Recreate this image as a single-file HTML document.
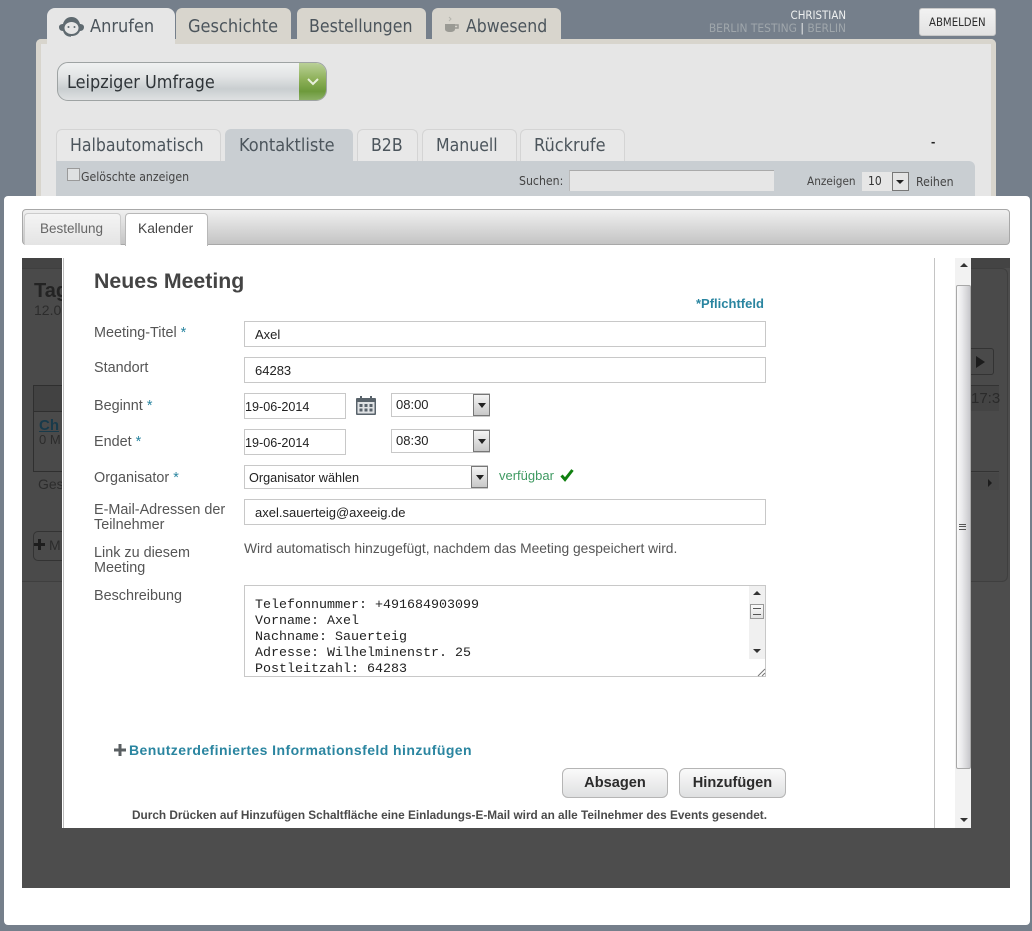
<!DOCTYPE html>
<html><head><meta charset="utf-8"><title>Neues Meeting</title>
<style>
html,body{margin:0;padding:0;width:1032px;height:931px;overflow:hidden;background:#757f8b;font-family:"Liberation Sans",sans-serif}
div,span,svg{position:absolute;box-sizing:border-box}
.t{white-space:nowrap;line-height:1}
.h{font-family:"DejaVu Sans Condensed","DejaVu Sans",sans-serif;font-stretch:condensed;color:#4c555c}
.tab{background:#d8d5cd;border-radius:6px 6px 0 0;top:8px;height:31px}
.st{background:#e8e8e8;border:1px solid #d4d4d4;border-bottom:0;border-radius:6px 6px 0 0;top:129px;height:32px}
.l{color:#555;font-size:14.400px;left:94px;line-height:15px;white-space:nowrap}
.l b{font-weight:normal;color:#2a85a0}
.i{background:#fff;border:1px solid #c8c8c8;font-size:13px;color:#222;line-height:24px;white-space:nowrap}
.ar{background:linear-gradient(#f4f4f4,#c8c8c8);border:1px solid #777;width:17px}
.ar:after{content:"";position:absolute;left:4px;top:8px;border:4px solid transparent;border-top:5px solid #222;border-bottom:0}
.btn{background:linear-gradient(#fafafa,#dfe0e1);border:1px solid #b5b5b5;border-radius:6px;font-weight:bold;font-size:14.600px;color:#2b2b2b;text-align:center;line-height:29px;top:768px;height:30px}
</style></head><body>

<!-- background app -->
<div style="left:36px;top:39px;width:960px;height:170px;background:#e6e6e6;border:5px solid #d8d5cd;border-bottom:0;border-radius:5px 5px 0 0"></div>
<div class="tab" style="left:47px;width:128px;background:#e6e6e6;height:38px;border-radius:8px 8px 0 0"></div>
<svg style="left:58px;top:16px" width="27" height="22" viewBox="0 0 27 22"><path d="M5 15C2 15 1 13 1 11S3 8 5 8C6 4 9 1 13.500 1S21 4 22 8C24 8 26 9 26 11S25 15 22 15C20 19 17 20 13.500 20S7 19 5 15Z" fill="#5f6a70"/><ellipse cx="13.500" cy="12" rx="7" ry="6" fill="#e6e6e6"/><circle cx="10.500" cy="11" r="1" fill="#5f6a70"/><circle cx="16.500" cy="11" r="1" fill="#5f6a70"/><path d="M6 15C7 19 10 20 13 20" fill="none" stroke="#5f6a70" stroke-width="1.500"/></svg>
<span class="t h" style="left:90px;top:18px;font-size:18px">Anrufen</span>
<div class="tab" style="left:176px;width:115px"></div>
<span class="t h" style="left:188px;top:18px;font-size:18px">Geschichte</span>
<div class="tab" style="left:297px;width:129px"></div>
<span class="t h" style="left:309px;top:19px;font-size:17.600px">Bestellungen</span>
<div class="tab" style="left:432px;width:129px"></div>
<svg style="left:444px;top:16px" width="16" height="18" viewBox="0 0 16 18"><path d="M1 8H11V13C11 15 9 16 6 16S1 15 1 13Z" fill="#9a9a94"/><path d="M11 9H14V12H11" fill="none" stroke="#9a9a94" stroke-width="1.500"/><path d="M5 1L7 3L5 5" fill="none" stroke="#b5b5ae"/></svg>
<span class="t h" style="left:466px;top:19px;font-size:17.500px">Abwesend</span>

<span class="t h" style="right:186px;top:10px;font-size:11.400px;color:#eef0f0">CHRISTIAN</span>
<span class="t h" style="right:186px;top:23px;font-size:11.900px;color:#9fa6ab">BERLIN TESTING <span style="position:static;color:#eee">|</span> BERLIN</span>
<div style="left:919px;top:8px;width:77px;height:28px;background:linear-gradient(#f2f2f2,#e2e2e2);border-radius:3px;border:1px solid #c8c8c8"></div>
<span class="t h" style="left:929px;top:17px;font-size:11.300px;color:#2c2c2c">ABMELDEN</span>

<div style="left:57px;top:62px;width:270px;height:39px;border:1px solid #9ea3a3;border-radius:11px;background:linear-gradient(#f0f1f1,#e3e5e6 35%,#c9ced0 70%,#dfe1e2);overflow:hidden">
<div style="left:241px;top:-1px;width:28px;height:39px;background:linear-gradient(#bcd29b,#8db058 45%,#6d9a3b 75%,#8fb36a)"></div></div>
<svg style="left:306px;top:77px" width="14" height="10" viewBox="0 0 14 10"><path d="M2 2L7 7L12 2" fill="none" stroke="#e8f0dc" stroke-width="2"/></svg>
<span class="t h" style="left:67px;top:74px;font-size:17.900px;color:#2f3438">Leipziger Umfrage</span>

<div class="st" style="left:56px;width:165px"></div><span class="t h" style="left:70px;top:138px;font-size:17.500px">Halbautomatisch</span>
<div class="st" style="left:225px;width:128px;background:#c9ced2;border-color:#c9ced2"></div><span class="t h" style="left:239px;top:137px;font-size:18px">Kontaktliste</span>
<div class="st" style="left:357px;width:61px"></div><span class="t h" style="left:371px;top:138px;font-size:17.500px">B2B</span>
<div class="st" style="left:422px;width:95px"></div><span class="t h" style="left:436px;top:138px;font-size:17.500px">Manuell</span>
<div class="st" style="left:520px;width:105px"></div><span class="t h" style="left:534px;top:137px;font-size:18px">Rückrufe</span>
<span class="t" style="left:931px;top:135px;font-size:13px;font-weight:bold;color:#222">-</span>

<div style="left:56px;top:161px;width:919px;height:40px;background:#c9ced2;border-radius:0 6px 0 0"></div>
<div style="left:67px;top:168px;width:13px;height:13px;background:#dfe1e2;border:1px solid #9a9a9a"></div>
<span class="t h" style="left:81px;top:171px;font-size:12.200px;color:#444">Gelöschte anzeigen</span>
<span class="t h" style="left:519px;top:175px;font-size:12.200px;color:#444">Suchen:</span>
<div style="left:569px;top:170px;width:205px;height:21px;background:#e6e6e6;border-top:1px solid #aaa;border-left:1px solid #bbb"></div>
<span class="t h" style="left:807px;top:176px;font-size:11.700px;color:#444">Anzeigen</span>
<div style="left:862px;top:172px;width:30px;height:19px;background:#e6e6e6"></div>
<span class="t h" style="left:868px;top:175px;font-size:12px;color:#333">10</span>
<div style="left:892px;top:172px;width:17px;height:19px;background:#e4e4e4;border:1px solid #777"></div>
<div style="left:896px;top:180px;border:4px solid transparent;border-top:4px solid #222;border-bottom:0"></div>
<span class="t h" style="left:916px;top:176px;font-size:12.200px;color:#444">Reihen</span>

<!-- modal -->
<div style="left:4px;top:196px;width:1026px;height:729px;background:#fff;border-radius:4px"></div>
<div style="left:22px;top:209px;width:988px;height:36px;background:linear-gradient(#f0f0f0,#c4c4c4);border:1px solid #a8a8a8;border-radius:4px"></div>
<div style="left:24px;top:213px;width:97px;height:32px;background:linear-gradient(#f4f4f4,#e4e4e4);border:1px solid #ccc;border-bottom:0;border-radius:4px 4px 0 0"></div>
<span class="t" style="left:40px;top:222px;font-size:13.500px;color:#666">Bestellung</span>
<div style="left:125px;top:213px;width:83px;height:33px;background:#fff;border:1px solid #b8b8b8;border-bottom:0;border-radius:4px 4px 0 0"></div>
<span class="t" style="left:138px;top:222px;font-size:13.800px;color:#444">Kalender</span>

<!-- dark overlay area -->
<div style="left:22px;top:258px;width:988px;height:630px;background:#4d4d4d"></div>
<div style="left:22px;top:268px;width:986px;height:314px;background:#4a4a4a;border:1px solid #3f3f3f;border-left:0;border-radius:0 6px 6px 0"></div>
<div style="left:22px;top:258px;width:988px;height:10px;background:#444"></div>
<span class="t" style="left:34px;top:281px;font-size:20px;font-weight:bold;color:#232323">Tag</span>
<span class="t" style="left:34px;top:303px;font-size:14px;color:#2c2c2c">12.0</span>
<div style="left:33px;top:385px;width:30px;height:87px;border:1px solid #2f2f2f;border-right:0"></div>
<div style="left:34px;top:386px;width:29px;height:26px;background:#424242;border-bottom:1px solid #2f2f2f"></div>
<span class="t" style="left:39px;top:418px;font-size:15px;font-weight:bold;color:#183a4a;text-decoration:underline">Ch</span>
<span class="t" style="left:39px;top:433px;font-size:13px;color:#2c2c2c">0 M</span>
<span class="t" style="left:38px;top:477px;font-size:14px;color:#2c2c2c">Ges</span>
<div style="left:33px;top:531px;width:30px;height:30px;border:1px solid #333;border-right:0;border-radius:5px 0 0 5px"></div>
<svg style="left:34px;top:539px" width="11" height="11" viewBox="0 0 11 11"><path d="M5.500 0V11M0 5.500H11" stroke="#1d1d1d" stroke-width="3"/></svg>
<span class="t" style="left:49px;top:538px;font-size:14px;color:#2c2c2c">M</span>
<div style="left:971px;top:348px;width:23px;height:27px;border:1px solid #333;border-left:0;border-radius:0 3px 3px 0"></div>
<div style="left:976px;top:356px;border:6px solid transparent;border-left:9px solid #1c1c1c;border-right:0"></div>
<div style="left:971px;top:385px;width:28px;height:26px;background:#444;border-top:1px solid #333"></div>
<span class="t" style="left:971px;top:391px;font-size:15px;color:#2a2a2a">17:3</span>
<div style="left:971px;top:471px;width:28px;height:1px;background:#333"></div>
<div style="left:971px;top:473px;width:28px;height:17px;background:#474747"></div>
<div style="left:988px;top:479px;border:4px solid transparent;border-left:4px solid #1c1c1c;border-right:0"></div>

<!-- iframe -->
<div style="left:62px;top:258px;width:909px;height:570px;background:#fff"></div>
<div style="left:63px;top:258px;width:1px;height:570px;background:#bdbdbd"></div>
<div style="left:934px;top:258px;width:1px;height:570px;background:#c4c4c4"></div>

<!-- scrollbar -->
<div style="left:955px;top:258px;width:16px;height:570px;background:#f2f2f2"></div>
<div style="left:956px;top:285px;width:15px;height:484px;background:linear-gradient(90deg,#f9f9f9,#eaeaec 40%,#c8c8cc);border:1px solid #a8a8a8;border-radius:2px"></div>
<div style="left:960px;top:263px;border:4px solid transparent;border-bottom:4px solid #333;border-top:0"></div>
<div style="left:960px;top:818px;border:4px solid transparent;border-top:4px solid #333;border-bottom:0"></div>
<div style="left:959px;top:524px;width:7px;height:6px;border-top:1px solid #555;border-bottom:1px solid #555"></div>
<div style="left:959px;top:526px;width:7px;height:2px;border-top:1px solid #555"></div>

<!-- form -->
<span class="t" style="left:94px;top:271px;font-size:21.300px;font-weight:bold;color:#444">Neues Meeting</span>
<span class="t" style="left:696px;top:297px;font-size:13px;font-weight:bold;color:#2a85a0">*Pflichtfeld</span>

<div class="l" style="top:326px">Meeting-Titel <b style="position:static">*</b></div>
<div class="i" style="left:244px;top:321px;width:522px;height:26px;padding-left:10px;line-height:25px">Axel</div>
<div class="l" style="top:361px">Standort</div>
<div class="i" style="left:244px;top:357px;width:522px;height:26px;padding-left:10px;line-height:25px">64283</div>
<div class="l" style="top:399px">Beginnt <b style="position:static">*</b></div>
<div class="i" style="left:244px;top:393px;width:102px;height:26px;padding-left:0;line-height:26px;font-size:12.600px">19-06-2014</div>
<svg style="left:356px;top:396px" width="20" height="19" viewBox="0 0 20 19"><rect x="0" y="2" width="20" height="17" rx="1" fill="#59636b"/><rect x="1.500" y="6" width="17" height="11.500" fill="#dfe2e4"/><rect x="4" y="0" width="2" height="4" fill="#59636b"/><rect x="14" y="0" width="2" height="4" fill="#59636b"/><g fill="#59636b"><rect x="3.500" y="8" width="3" height="3"/><rect x="8.500" y="8" width="3" height="3"/><rect x="13.500" y="8" width="3" height="3"/><rect x="3.500" y="12.500" width="3" height="3"/><rect x="8.500" y="12.500" width="3" height="3"/><rect x="13.500" y="12.500" width="3" height="3"/></g></svg>
<div class="i" style="left:391px;top:393px;width:99px;height:24px;padding-left:4px;line-height:22px">08:00</div>
<div class="ar" style="left:473px;top:394px;height:22px"></div>
<div class="l" style="top:435px">Endet <b style="position:static">*</b></div>
<div class="i" style="left:244px;top:429px;width:102px;height:26px;padding-left:0;line-height:26px;font-size:12.600px">19-06-2014</div>
<div class="i" style="left:391px;top:429px;width:99px;height:24px;padding-left:4px;line-height:22px">08:30</div>
<div class="ar" style="left:473px;top:430px;height:22px"></div>
<div class="l" style="top:471px">Organisator <b style="position:static">*</b></div>
<div class="i" style="left:244px;top:465px;width:244px;height:24px;padding-left:4px;line-height:24px;font-size:12.700px">Organisator wählen</div>
<div class="ar" style="left:471px;top:466px;height:22px"></div>
<span class="t" style="left:499px;top:469px;font-size:13px;color:#3f9a62">verfügbar</span>
<svg style="left:560px;top:468px" width="14" height="14" viewBox="0 0 14 14"><path d="M1.500 7.500L5 11.500L12.500 2" fill="none" stroke="#108010" stroke-width="3"/></svg>
<div class="l" style="top:503px">E-Mail-Adressen der<br>Teilnehmer</div>
<div class="i" style="left:244px;top:499px;width:522px;height:26px;padding-left:10px;line-height:25px">axel.sauerteig@axeeig.de</div>
<div class="l" style="top:546px">Link zu diesem<br>Meeting</div>
<span class="t" style="left:244px;top:542px;font-size:13.800px;color:#555">Wird automatisch hinzugefügt, nachdem das Meeting gespeichert wird.</span>
<div class="l" style="top:589px">Beschreibung</div>

<div style="left:244px;top:585px;width:522px;height:92px;border:1px solid #c8c8c8;background:#fff"></div>
<div style="left:255px;top:598px;font-family:'Liberation Mono',monospace;font-size:13.330px;line-height:16px;color:#222;white-space:pre;height:78px;overflow:hidden;width:480px">Telefonnummer: +491684903099
Vorname: Axel
Nachname: Sauerteig
Adresse: Wilhelminenstr. 25
Postleitzahl: 64283</div>
<div style="left:749px;top:586px;width:16px;height:73px;background:#f0f0f0"></div>
<div style="left:753px;top:591px;border:4px solid transparent;border-bottom:4px solid #333;border-top:0"></div>
<div style="left:753px;top:649px;border:4px solid transparent;border-top:4px solid #333;border-bottom:0"></div>
<div style="left:750px;top:604px;width:14px;height:15px;background:linear-gradient(#fafafa,#e2e2e2);border:1px solid #999"></div>
<div style="left:753px;top:608px;width:8px;height:7px;border-top:1px solid #555;border-bottom:1px solid #555"></div>
<svg style="left:756px;top:667px" width="10" height="10" viewBox="0 0 10 10"><path d="M2 9L9 2M6 9L9 6" stroke="#777" stroke-width="1"/></svg>

<svg style="left:114px;top:744px" width="12" height="12" viewBox="0 0 12 12"><path d="M6 0V12M0 6H12" stroke="#5a5f62" stroke-width="3"/></svg>
<span class="t" style="left:129px;top:743px;font-size:14px;font-weight:bold;color:#2a85a0;letter-spacing:.43px">Benutzerdefiniertes Informationsfeld hinzufügen</span>
<div class="btn" style="left:562px;width:106px">Absagen</div>
<div class="btn" style="left:679px;width:107px">Hinzufügen</div>
<span class="t" style="left:132px;top:810px;font-size:11.800px;font-weight:bold;color:#4a4a4a">Durch Drücken auf Hinzufügen Schaltfläche eine Einladungs-E-Mail wird an alle Teilnehmer des Events gesendet.</span>

</body></html>
